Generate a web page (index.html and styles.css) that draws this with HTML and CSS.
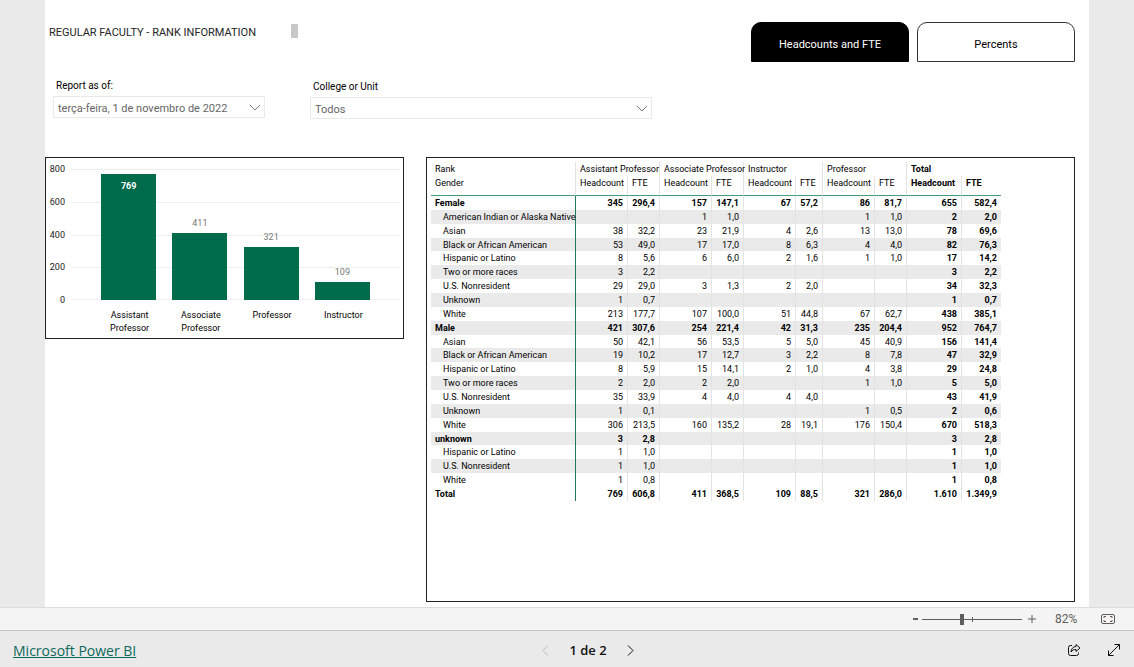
FILE: index.html
```
<!DOCTYPE html>
<html lang="pt">
<head>
<meta charset="utf-8">
<title>Regular Faculty - Rank Information</title>
<link rel="stylesheet" href="styles.css">
</head>
<body>
<main class="stage">
  <div class="report">
    <header class="top">
      <div class="heading">
        <h1>REGULAR FACULTY - RANK INFORMATION</h1>
        <span class="marker"></span>
      </div>
      <nav class="tabs">
        <button class="tab active" type="button">Headcounts and FTE</button>
        <button class="tab" type="button">Percents</button>
      </nav>
    </header>

    <section class="filters">
      <div class="filter date">
        <label for="asof">Report as of:</label>
        <div class="drop">
          <select id="asof"><option>terça-feira, 1 de novembro de 2022</option></select>
          <svg class="chevron" viewBox="0 0 12 7"><path d="M1 1l5 5 5-5"/></svg>
        </div>
      </div>
      <div class="filter unit">
        <label for="unit">College or Unit</label>
        <div class="drop">
          <select id="unit"><option>Todos</option></select>
          <svg class="chevron" viewBox="0 0 12 7"><path d="M1 1l5 5 5-5"/></svg>
        </div>
      </div>
    </section>

    <section class="visuals">
      <div class="panel chart">
        <div class="axis"><span>800</span><span>600</span><span>400</span><span>200</span><span>0</span></div>
        <div class="plot">
          <div class="bar" style="height:96.1%"><b>769</b></div>
          <div class="bar out" style="height:51.4%"><b>411</b></div>
          <div class="bar out" style="height:40.1%"><b>321</b></div>
          <div class="bar out" style="height:13.6%"><b>109</b></div>
        </div>
        <div class="names"><span>Assistant Professor</span><span>Associate Professor</span><span>Professor</span><span>Instructor</span></div>
      </div>

      <div class="panel matrix">
        <table>
          <colgroup><col class="c-name"><col class="c-hc"><col class="c-fte"><col class="c-hc"><col class="c-fte"><col class="c-hc"><col class="c-short"><col class="c-hc"><col class="c-fte"><col class="c-thc"><col class="c-tfte"></colgroup>
          <thead>
            <tr><th>Rank</th><th colspan="2">Assistant Professor</th><th colspan="2">Associate Professor</th><th colspan="2">Instructor</th><th colspan="2">Professor</th><th colspan="2" class="total">Total</th></tr>
            <tr><th>Gender</th><th>Headcount</th><th>FTE</th><th>Headcount</th><th>FTE</th><th>Headcount</th><th>FTE</th><th>Headcount</th><th>FTE</th><th class="total">Headcount</th><th class="total">FTE</th></tr>
          </thead>
          <tbody>
            <tr class="group"><th>Female</th><td>345</td><td>296,4</td><td>157</td><td>147,1</td><td>67</td><td>57,2</td><td>86</td><td>81,7</td><td>655</td><td>582,4</td></tr>
            <tr><th>American Indian or Alaska Native</th><td></td><td></td><td>1</td><td>1,0</td><td></td><td></td><td>1</td><td>1,0</td><td>2</td><td>2,0</td></tr>
            <tr><th>Asian</th><td>38</td><td>32,2</td><td>23</td><td>21,9</td><td>4</td><td>2,6</td><td>13</td><td>13,0</td><td>78</td><td>69,6</td></tr>
            <tr><th>Black or African American</th><td>53</td><td>49,0</td><td>17</td><td>17,0</td><td>8</td><td>6,3</td><td>4</td><td>4,0</td><td>82</td><td>76,3</td></tr>
            <tr><th>Hispanic or Latino</th><td>8</td><td>5,6</td><td>6</td><td>6,0</td><td>2</td><td>1,6</td><td>1</td><td>1,0</td><td>17</td><td>14,2</td></tr>
            <tr><th>Two or more races</th><td>3</td><td>2,2</td><td></td><td></td><td></td><td></td><td></td><td></td><td>3</td><td>2,2</td></tr>
            <tr><th>U.S. Nonresident</th><td>29</td><td>29,0</td><td>3</td><td>1,3</td><td>2</td><td>2,0</td><td></td><td></td><td>34</td><td>32,3</td></tr>
            <tr><th>Unknown</th><td>1</td><td>0,7</td><td></td><td></td><td></td><td></td><td></td><td></td><td>1</td><td>0,7</td></tr>
            <tr><th>White</th><td>213</td><td>177,7</td><td>107</td><td>100,0</td><td>51</td><td>44,8</td><td>67</td><td>62,7</td><td>438</td><td>385,1</td></tr>
            <tr class="group"><th>Male</th><td>421</td><td>307,6</td><td>254</td><td>221,4</td><td>42</td><td>31,3</td><td>235</td><td>204,4</td><td>952</td><td>764,7</td></tr>
            <tr><th>Asian</th><td>50</td><td>42,1</td><td>56</td><td>53,5</td><td>5</td><td>5,0</td><td>45</td><td>40,9</td><td>156</td><td>141,4</td></tr>
            <tr><th>Black or African American</th><td>19</td><td>10,2</td><td>17</td><td>12,7</td><td>3</td><td>2,2</td><td>8</td><td>7,8</td><td>47</td><td>32,9</td></tr>
            <tr><th>Hispanic or Latino</th><td>8</td><td>5,9</td><td>15</td><td>14,1</td><td>2</td><td>1,0</td><td>4</td><td>3,8</td><td>29</td><td>24,8</td></tr>
            <tr><th>Two or more races</th><td>2</td><td>2,0</td><td>2</td><td>2,0</td><td></td><td></td><td>1</td><td>1,0</td><td>5</td><td>5,0</td></tr>
            <tr><th>U.S. Nonresident</th><td>35</td><td>33,9</td><td>4</td><td>4,0</td><td>4</td><td>4,0</td><td></td><td></td><td>43</td><td>41,9</td></tr>
            <tr><th>Unknown</th><td>1</td><td>0,1</td><td></td><td></td><td></td><td></td><td>1</td><td>0,5</td><td>2</td><td>0,6</td></tr>
            <tr><th>White</th><td>306</td><td>213,5</td><td>160</td><td>135,2</td><td>28</td><td>19,1</td><td>176</td><td>150,4</td><td>670</td><td>518,3</td></tr>
            <tr class="group"><th>unknown</th><td>3</td><td>2,8</td><td></td><td></td><td></td><td></td><td></td><td></td><td>3</td><td>2,8</td></tr>
            <tr><th>Hispanic or Latino</th><td>1</td><td>1,0</td><td></td><td></td><td></td><td></td><td></td><td></td><td>1</td><td>1,0</td></tr>
            <tr><th>U.S. Nonresident</th><td>1</td><td>1,0</td><td></td><td></td><td></td><td></td><td></td><td></td><td>1</td><td>1,0</td></tr>
            <tr><th>White</th><td>1</td><td>0,8</td><td></td><td></td><td></td><td></td><td></td><td></td><td>1</td><td>0,8</td></tr>
            <tr class="group grand"><th>Total</th><td>769</td><td>606,8</td><td>411</td><td>368,5</td><td>109</td><td>88,5</td><td>321</td><td>286,0</td><td>1.610</td><td>1.349,9</td></tr>
          </tbody>
        </table>
      </div>
    </section>
  </div>
</main>

<div class="zoombar">
  <button class="step" type="button" aria-label="Zoom out"><svg width="5" height="12" viewBox="0 0 5 12"><path d="M0 6h5" stroke-width="2"/></svg></button>
  <input class="zoom" type="range" min="0" max="100" value="40" aria-label="Zoom">
  <button class="step plus" type="button" aria-label="Zoom in"><svg width="8" height="12" viewBox="0 0 8 12"><path d="M0 6h8M4 2v8"/></svg></button>
  <span class="percent">82%</span>
  <button class="fit" type="button" aria-label="Fit to page"><svg width="14" height="12" viewBox="0 0 14 12"><rect x=".5" y="1.5" width="13" height="9" rx="1.5"/><path d="M5 3.500H3V5M9 3.500h2V5M5 8.500H3V7M9 8.500h2V7"/></svg></button>
</div>

<footer class="footer">
  <a class="brand" href="#">Microsoft Power BI</a>
  <div class="pager">
    <button type="button" class="prev" aria-label="Previous page" disabled><svg width="7" height="11" viewBox="0 0 7 11"><path d="M6 .5l-5 5 5 5"/></svg></button>
    <span>1 de 2</span>
    <button type="button" aria-label="Next page"><svg width="7" height="11" viewBox="0 0 7 11"><path d="M1 .5l5 5-5 5"/></svg></button>
  </div>
  <div class="actions">
    <button type="button" aria-label="Share"><svg width="14" height="14" viewBox="0 0 14 14"><path d="M5 2.500H3.500a2 2 0 0 0-2 2v6a2 2 0 0 0 2 2h6a2 2 0 0 0 2-2V9.500"/><path d="M9 1.500l4 3.500-4 3.500V6.500C6.500 6.500 5 7.200 4 9 4.200 5.800 6 3.500 9 3.500z"/></svg></button>
    <button type="button" aria-label="Full screen"><svg width="14" height="14" viewBox="0 0 14 14"><path d="M1.500 12.500l11-11M7.500 1.500h5v5M1.500 7.500v5h5"/></svg></button>
  </div>
</footer>
</body>
</html>
```
FILE: styles.css
```
* { box-sizing: border-box; }
body {
  margin: 0;
  min-height: 100vh;
  display: flex;
  flex-direction: column;
  background: #eaeaea;
  color: #000;
  font-family: Roboto, "Open Sans", sans-serif;
  font-size: 9px;
}
button { border: 0; padding: 0; background: none; font: inherit; color: inherit; }
button svg { display: block; fill: none; stroke: currentColor; }

.stage { flex: 1; display: flex; padding: 0 45px; }
.report {
  flex: 1;
  display: flex;
  flex-direction: column;
  padding: 22px 14px 5px 0;
  background: #fff;
}

.top { display: flex; justify-content: space-between; height: 40px; }
.heading { display: flex; gap: 35px; padding: 2px 0 0 4px; }
h1 { margin: 0; font-size: 11px; line-height: 18px; font-weight: 400; color: #252423; white-space: nowrap; }
.marker { width: 7px; height: 14px; background: #c8c8c8; }
.tabs { display: flex; gap: 8px; }
.tab { width: 158px; padding-top: 5px; border: 1px solid #333; border-radius: 10px 10px 0 0; font-size: 11px; color: #000; }
.tab.active { background: #000; border-color: #000; color: #fff; }

.filters { display: flex; gap: 45px; padding: 15px 0 0 8px; height: 95px; }
.filter label { display: block; padding-left: 3px; font-size: 10px; line-height: 18px; color: #000; }
.date { width: 212px; }
.unit { width: 342px; padding-top: 1px; }
.drop { position: relative; margin-top: 1px; }
select {
  display: block;
  width: 100%;
  height: 22px;
  padding: 3px 24px 0 4px;
  appearance: none;
  border: 1px solid #eaeaea;
  border-radius: 0;
  background: #fff;
  color: #666;
  font: 11px Roboto, "Open Sans", sans-serif;
}
.chevron { position: absolute; right: 4px; top: 8px; width: 12px; height: 7px; fill: none; stroke: #777; pointer-events: none; }

.visuals { flex: 1; display: grid; grid-template-columns: 359fr 649fr; gap: 22px; align-items: start; }
.panel { border: 1px solid #222; min-width: 0; }

.chart {
  display: grid;
  grid-template-columns: 19px 1fr;
  column-gap: 6px;
  padding: 5px 3px 3px 0;
}
.axis { display: flex; flex-direction: column; justify-content: space-between; text-align: right; line-height: 13px; color: #222; }
.plot {
  display: flex;
  justify-content: space-around;
  align-items: flex-end;
  height: 131px;
  margin: 6px 0 7px;
  padding: 0 22px;
  background: linear-gradient(#eee, #eee) 0 100% / 100% 1px no-repeat, repeating-linear-gradient(#eee 0 1px, transparent 1px 25%);
}
.bar { width: 55px; background: #006b4b; text-align: center; }
.bar b { display: block; line-height: 12px; padding-top: 6px; color: #fff; }
.bar.out b { margin-top: -16px; padding: 0; color: #777; font-weight: 400; }
.names {
  grid-column: 2;
  display: flex;
  justify-content: space-around;
  padding: 2px 21px 0 23px;
  line-height: 13px;
  text-align: center;
}
.names span { width: 55px; }

.matrix { height: 100%; padding: 4px; }
table { width: 570px; height: 339px; table-layout: fixed; border-collapse: separate; border-spacing: 0; line-height: 11px; }
.c-name { width: 145px; }
.c-hc { width: 52px; }
.c-fte { width: 32px; }
.c-short { width: 27px; }
.c-thc { width: 55px; }
.c-tfte { width: 39px; }
th, td { padding: 2px 4px 0; white-space: nowrap; font-weight: 400; text-align: left; vertical-align: top; }
td { text-align: right; }
tr > * { border-right: 1px solid #e3e3e3; }
tr > :last-child { border-right: 0; }
thead tr:first-child th { height: 14px; }
thead tr:last-child th { height: 20px; border-bottom: 1px solid #459b80; }
tbody th { padding-left: 12px; border-right-color: #1f7a5c; }
tbody tr:nth-child(even):not(.grand) { background: #eaeaea; }
.group th { padding-left: 4px; }
.total, .group > *, td:nth-child(n+10) { font-weight: 700; }

.zoombar {
  display: flex;
  align-items: center;
  justify-content: flex-end;
  height: 24px;
  padding-right: 19px;
  background: #f4f4f4;
  border-top: 1px solid #ddd;
  border-bottom: 1px solid #c8c8c8;
  color: #605e5c;
}
.zoom {
  width: 100px;
  height: 12px;
  margin: 0 6px 0 4px;
  appearance: none;
  background: linear-gradient(#605e5c, #605e5c) 0 50% / 100% 1px no-repeat, linear-gradient(#605e5c, #605e5c) 50% 50% / 1px 5px no-repeat;
}
.zoom::-webkit-slider-thumb { appearance: none; width: 4px; height: 11px; background: #605e5c; }
.percent { width: 46px; font-size: 12px; }
.plus { margin-right: 19px; }

.footer { display: grid; grid-template-columns: 1fr auto 1fr; align-items: center; height: 36px; padding: 2px 13px 0; font-family: "Open Sans", "Noto Sans", sans-serif; }
.brand { font-size: 14px; color: #0c695a; }
.pager { display: flex; align-items: center; gap: 20px; padding-left: 42px; font-size: 13px; font-weight: 600; color: #111; }
.prev { color: #bbb; }
.actions { display: flex; justify-content: flex-end; gap: 26px; color: #111; }
```
